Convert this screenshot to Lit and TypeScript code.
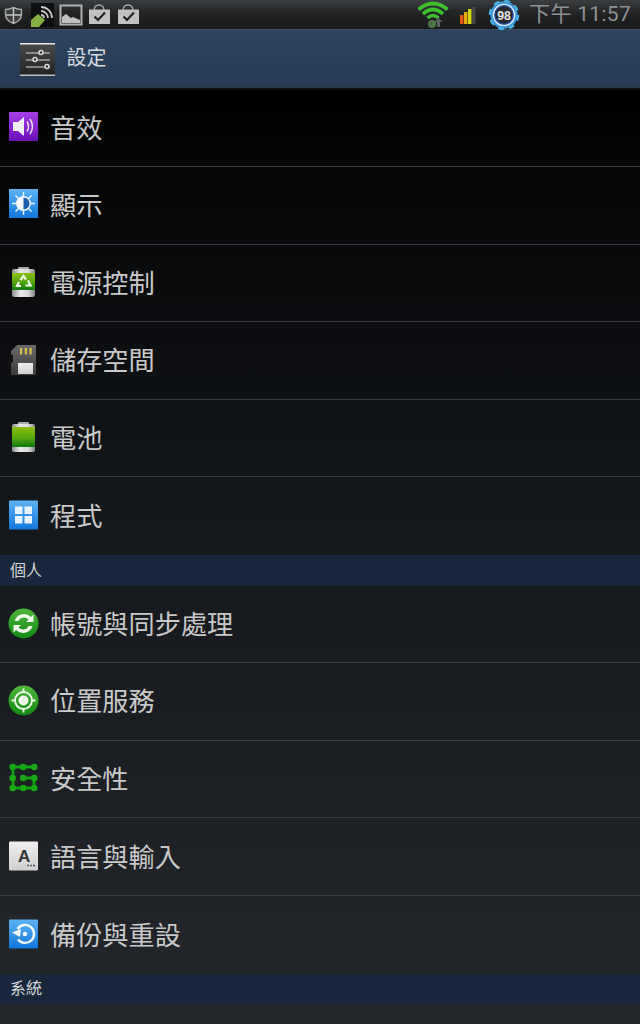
import { LitElement, html, css, svg } from "lit";
import { customElement } from "lit/decorators.js";

const gradDefs = svg`<defs>
<linearGradient id="pur" x1="0" y1="0" x2="0" y2="1"><stop offset="0" stop-color="#a63fe6"/><stop offset="1" stop-color="#6a10b8"/></linearGradient>
<linearGradient id="blu" x1="0" y1="0" x2="0" y2="1"><stop offset="0" stop-color="#5db2f5"/><stop offset="1" stop-color="#1177dd"/></linearGradient>
<linearGradient id="grn" x1="0" y1="0" x2="0" y2="1"><stop offset="0" stop-color="#4fb53a"/><stop offset="1" stop-color="#118a14"/></linearGradient>
<linearGradient id="bat" x1="0" y1="0" x2="0" y2="1"><stop offset="0" stop-color="#8bbf14"/><stop offset=".55" stop-color="#55a60c"/><stop offset="1" stop-color="#0b7a10"/></linearGradient>
<linearGradient id="sil" x1="0" y1="0" x2="1" y2="0"><stop offset="0" stop-color="#8c8c8c"/><stop offset=".35" stop-color="#e8e8e8"/><stop offset=".7" stop-color="#dcdcdc"/><stop offset="1" stop-color="#848484"/></linearGradient>
<linearGradient id="gry" x1="0" y1="0" x2="0" y2="1"><stop offset="0" stop-color="#f0f0f0"/><stop offset="1" stop-color="#cfcfcf"/></linearGradient>
<linearGradient id="sd" x1="0" y1="0" x2="0" y2="1"><stop offset="0" stop-color="#6a6a6a"/><stop offset="1" stop-color="#3c3c3c"/></linearGradient>
</defs>`;

const ic = (body: unknown) => html`<svg class="ic" viewBox="0 0 32 32" width="32" height="32">${gradDefs}${body}</svg>`;

const batteryShell = svg`<rect x="10" y="1" width="11" height="4" rx="1" fill="#a8a8a8"/>
  <rect x="4" y="3" width="23" height="28" rx="2" fill="url(#sil)"/>`;

const icons: Record<string, unknown> = {
  sound: ic(svg`<rect x="1" y="1" width="29" height="29" fill="url(#pur)"/>
    <path d="M5 11h5l6-5v19l-6-5H5z" fill="#eee"/>
    <path d="M19 10.500q3 5 0 10M22 8q5 7.500 0 15" fill="none" stroke="#e8e0f0" stroke-width="1.600"/>`),
  display: ic(svg`<rect x="1" y="1" width="29" height="29" fill="url(#blu)"/>
    <path d="M15.500 4v23M4 15.500h23M7.500 7.500l16 16M23.500 7.500l-16 16" stroke="#f2f8ff" stroke-width="1.400"/>
    <circle cx="15.500" cy="15.500" r="7.500" fill="#f4f8fc"/>
    <path d="M15.500 9.500a6 6 0 0 1 0 12z" fill="#1d5ea8"/>`),
  power: ic(svg`${batteryShell}
    <rect x="4" y="7" width="23" height="17" fill="url(#bat)"/>
    <g fill="none" stroke="#f4fbef" stroke-width="2.200"><path d="M12.500 14l3-4 2.500 3.500"/><path d="M20 14.500l2.500 5h-5"/><path d="M13 20h-4l2-4"/></g>`),
  storage: ic(svg`<path d="M9 1H28V31H3V19.500L5 17.500V11.500L3 10V7z" fill="url(#sd)"/>
    <rect x="12" y="4" width="2.200" height="6.500" fill="#d8c04a"/>
    <rect x="16.800" y="4" width="2.200" height="6.500" fill="#d8c04a"/>
    <rect x="21.500" y="4" width="2.200" height="6.500" fill="#d8c04a"/>
    <rect x="10" y="19" width="15" height="11" fill="url(#gry)"/>`),
  battery: ic(svg`${batteryShell}
    <rect x="4" y="6" width="23" height="20" fill="url(#bat)"/>`),
  apps: ic(svg`<rect x="1" y="1.500" width="29" height="29" rx="1" fill="url(#blu)"/>
    <rect x="7" y="7.500" width="7.500" height="7.500" fill="#e8f3fd"/><rect x="16.500" y="7.500" width="7.500" height="7.500" fill="#e8f3fd"/>
    <rect x="7" y="17" width="7.500" height="7.500" fill="#e8f3fd"/><rect x="16.500" y="17" width="7.500" height="7.500" fill="#e8f3fd"/>`),
  account: ic(svg`<circle cx="15.500" cy="16.500" r="15" fill="url(#grn)"/>
    <path d="M6.500 14q2.500-7 9.500-7 4 0 7 3l2.500-2.500V15h-7.500l2.500-2.500q-2-2-4.500-2-4 0-5.500 3.500zM24.500 19q-2.500 7-9.500 7-4 0-7-3l-2.500 2.500V18h7.500l-2.500 2.500q2 2 4.500 2 4 0 5.500-3.500z" fill="#f2f8ee"/>`),
  location: ic(svg`<circle cx="15.500" cy="16.500" r="15" fill="url(#grn)"/>
    <path d="M15.500 4.500v4M15.500 24.500v4M3.500 16.500h4M23.500 16.500h4" stroke="#eef6ea" stroke-width="1.800"/>
    <circle cx="15.500" cy="16.500" r="8.500" fill="none" stroke="#eef6ea" stroke-width="1.800"/>
    <circle cx="15.500" cy="16.500" r="5" fill="#eef6ea"/>`),
  security: ic(svg`<path d="M5 5H26M5 5V26H26V16H15.300" fill="none" stroke="#14a012" stroke-width="2.800"/>
    <g fill="#18a814">${[4.7, 15.3, 26.3].flatMap((x) => [5, 16, 26].map((y) => svg`<circle cx="${x}" cy="${y}" r="3.300"/>`))}</g>`),
  language: ic(svg`<rect x="1" y="1.500" width="29" height="29" rx="1" fill="url(#gry)"/>
    <text x="10" y="21.500" font-family="Liberation Sans" font-weight="700" font-size="17" fill="#333">A</text>
    <path d="M19 25.500h2M22 25.500h2M25 25.500h2" stroke="#555" stroke-width="1.600"/>`),
  backup: ic(svg`<rect x="1" y="1.500" width="29" height="29" rx="1" fill="url(#blu)"/>
    <path d="M9.500 11a9 9 0 1 1 .5 10.500" fill="none" stroke="#f2f8ff" stroke-width="2.400"/>
    <path d="M4 14.500L13 11l-1 8z" fill="#f2f8ff"/>
    <circle cx="17" cy="16" r="2.300" fill="#f2f8ff"/>`),
};

const bag = svg`<path d="M5 8q0-6 5-6t5 6" fill="none" stroke="#aaa" stroke-width="1.300"/>
  <rect x="0" y="6.500" width="21" height="14.500" fill="#c0c2c2"/>
  <path d="M5.500 13.500l3.500 3.500 7-7.500" fill="none" stroke="#222" stroke-width="2.200"/>`;

@customElement("app-root")
export class AppRoot extends LitElement {
  static styles = css`
    :host { display: block; width: 640px; height: 1024px; overflow: hidden;
      font-family: "Noto Sans CJK TC", "Noto Sans", sans-serif;
      background: linear-gradient(#000 89px, #050607 170px, #14171b 520px, #1d2025 800px, #24272c 1024px); }
    .status { height: 29px; display: flex; align-items: center; background: linear-gradient(#3c3f41, #232527 40%, #17191b); }
    .right { margin-left: auto; display: flex; align-items: center; }
    .st { display: block; }
    .time { font-family: Roboto, "Noto Sans CJK TC", sans-serif; font-size: 21px; color: #8f9193; line-height: 29px; margin: 0 9px 0 9px; white-space: nowrap; letter-spacing: .3px; }
    .bar { height: 60.5px; box-sizing: border-box; display: flex; align-items: center; padding-left: 20px; gap: 11.5px;
      background: linear-gradient(#2e4460, #253a55); border-top: 1px solid #3d4c60; border-bottom: 2px solid #111; box-shadow: inset 0 -1px 0 #2a3543; color: #d8dce0; font-size: 20px; }
    .bar span { line-height: 1; margin-bottom: 4px; }
    .logo { display: block; margin-top: 1px; }
    .row { height: 77.6px; box-sizing: border-box; display: flex; align-items: center; padding-left: 8px; gap: 10px; border-bottom: 1px solid #3a3c3f; }
    .row.last { border-bottom: none; }
    .ic { display: block; flex: none; margin-top: -2px; }
    .row span { font-size: 26.2px; line-height: 1; color: #c9c9c9; margin-top: -2px; }
    .sec { height: 30.5px; box-sizing: border-box; display: flex; align-items: center; padding: 0 0 3px 10px; background: #18273c; color: #d3d5d8; font-size: 16px; }
  `;

  private row(k: string, t: string, last = false) {
    return html`<div class="row ${last ? "last" : ""}">${icons[k]}<span>${t}</span></div>`;
  }

  render() {
    return html`
      <div class="status">
        <svg class="st" width="146" height="29" viewBox="0 0 146 29">
          <g fill="#3a3c3d" stroke="#a4a6a6" stroke-width="1.400">
            <path d="M5.500 9.500q4 0 8-2 4 2 8 2v5q0 6-8 9-8-3-8-9z"/>
          </g>
          <path d="M13.500 7.500V23M5.500 15h16" fill="none" stroke="#c4c6c6" stroke-width="1.400"/>
          <rect x="31" y="3" width="23" height="24" fill="#0d0f10"/>
          <path d="M31 20l7-6 7 6-6 7h-8z" fill="#86b244"/>
          <path d="M41 15a3 3 0 0 1 3 3M41 11a7 7 0 0 1 7 7M41 7a11 11 0 0 1 11 11" fill="none" stroke="#c4c6c6" stroke-width="1.800"/>
          <rect x="60.500" y="5.500" width="21" height="19" fill="none" stroke="#b0b2b2" stroke-width="2"/>
          <path d="M62 23v-6l4-3 5 4 2-1 7 3v3z" fill="#c0c2c2"/>
          <g transform="translate(89 3)">${bag}</g>
          <g transform="translate(118 3)">${bag}</g>
        </svg>
        <div class="right">
          <svg class="st" width="71" height="29" viewBox="0 0 71 29">
            <g fill="none" stroke="#3fc02e">
              <path d="M1.500 9.500Q16-2.500 30.500 9.500" stroke-width="3.800"/>
              <path d="M6 14Q16 5 26 14" stroke-width="3.600"/>
              <path d="M10.500 18Q16 13 21.500 18" stroke-width="3.400"/>
            </g>
            <circle cx="15" cy="24" r="4" fill="#4c7a44"/>
            <path d="M15 29v-4h-3l3-3z" fill="#555"/>
            <path d="M20 27v-5h-3l4.500-4 4.500 4h-3v5z" fill="#5c5f5f"/>
            <rect x="43" y="15" width="3.500" height="9" fill="#e25a10"/>
            <rect x="47" y="12" width="3.500" height="12" fill="#e8a810"/>
            <rect x="51" y="9" width="3.500" height="15" fill="#cfd810"/>
            <rect x="55" y="7" width="3.500" height="17" fill="#444"/>
          </svg>
          <svg class="st" width="32" height="30" viewBox="0 0 34 30">
            <circle cx="17" cy="15" r="14.500" fill="#3b96dc"/>
            <circle cx="17" cy="15" r="15" fill="none" stroke="#49b4e8" stroke-width="2.500" stroke-dasharray="6 5.800"/>
            <circle cx="17" cy="15" r="12" fill="#dfe9f2"/>
            <circle cx="17" cy="15" r="10.500" fill="#1d4c9a"/>
            <circle cx="17" cy="15" r="9" fill="#26282a"/>
            <text x="17" y="20" text-anchor="middle" font-family="Liberation Sans" font-weight="700" font-size="13" fill="#e6e6e6">98</text>
          </svg>
          <div class="time">下午 11:57</div>
        </div>
      </div>
      <div class="bar">
        <svg class="logo" width="35" height="33" viewBox="0 0 35 33">
          <defs><linearGradient id="lg" x1="0" y1="0" x2="0" y2="1"><stop offset="0" stop-color="#4a4a4a"/><stop offset="1" stop-color="#222"/></linearGradient></defs>
          <rect x="0" y="0" width="35" height="33" rx="1" fill="url(#lg)"/>
          <rect x="0" y="0" width="35" height="1.500" fill="#e8e8e8"/>
          <rect x="0" y="31.500" width="35" height="1.500" fill="#c0c0c0"/>
          <path d="M6 10h24M6 17h24M6 24h24" stroke="#d8d8d8" stroke-width="1.200"/>
          <g fill="#333" stroke="#dcdcdc" stroke-width="1.500"><circle cx="21" cy="9.500" r="2"/><circle cx="15" cy="16.500" r="2"/><circle cx="27" cy="23.500" r="2"/></g>
        </svg>
        <span>設定</span>
      </div>
      ${this.row("sound", "音效")}
      ${this.row("display", "顯示")}
      ${this.row("power", "電源控制")}
      ${this.row("storage", "儲存空間")}
      ${this.row("battery", "電池")}
      ${this.row("apps", "程式", true)}
      <div class="sec">個人</div>
      ${this.row("account", "帳號與同步處理")}
      ${this.row("location", "位置服務")}
      ${this.row("security", "安全性")}
      ${this.row("language", "語言與輸入")}
      ${this.row("backup", "備份與重設", true)}
      <div class="sec">系統</div>
    `;
  }
}
